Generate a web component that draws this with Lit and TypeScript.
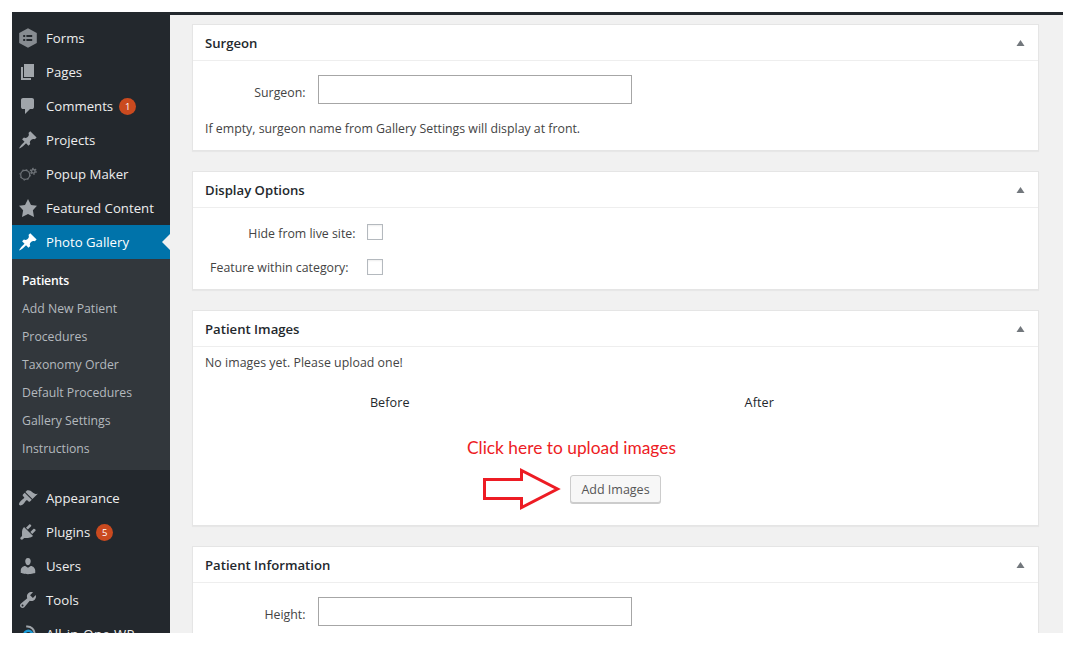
import { LitElement, html, css, svg, nothing } from "lit";
import { customElement, property } from "lit/decorators.js";
import { classMap } from "lit/directives/class-map.js";

const PIN = svg`<path d="M10.44 3.02l1.82-1.82 6.36 6.35-1.83 1.82c-1.05-.68-2.48-.57-3.41.36l-.75.75c-.92.93-1.04 2.35-.35 3.41l-1.83 1.82-2.41-2.41-2.8 2.79c-.42.42-3.38 2.71-3.8 2.29s1.86-3.39 2.28-3.81l2.79-2.79L4.1 9.36l1.83-1.82c1.05.69 2.48.57 3.4-.36l.75-.75c.93-.92 1.05-2.35.36-3.41z"/>`;

const ICONS: Record<string, unknown> = {
  forms: svg`<path opacity=".8" fill-rule="evenodd" d="M10 0.2L18.8 5v10L10 19.8 1.2 15V5zM5.2 6.9h2v2h-2zM8.4 6.9h5.8v2H8.4zM5.2 11.1h2v2h-2zM8.4 11.1h5.8v2H8.4z"/>`,
  pages: svg`<path d="M6 15V2h10v13H6zm-1 1h8v2H3V5h2v11z"/>`,
  comments: svg`<path d="M5 2h9q.82 0 1.41.59T16 4v7q0 .82-.59 1.41T14 13h-2l-5 5v-5H5q-.82 0-1.41-.59T3 11V4q0-.82.59-1.41T5 2z"/>`,
  pin: PIN,
  popup: svg`<g fill="none" stroke="currentColor" opacity=".6"><circle cx="7.2" cy="10.8" r="4.5" stroke-width="1.2"/><circle cx="7.2" cy="10.8" r="5.3" stroke-width="1" stroke-dasharray="1.7 2.46"/><circle cx="15.3" cy="7.3" r="1.8" stroke-width="1.4"/><circle cx="15.3" cy="7.3" r="2.9" stroke-width="1.2" stroke-dasharray="1.5 1.54"/></g>`,
  star: svg`<path d="M10 1l3 6 6 .75-4.12 4.62L16 19l-6-3-6 3 1.13-6.63L1 7.75 7 7z"/>`,
  appearance: svg`<path d="M14.48 11.06L7.41 3.99l1.5-1.5c.5-.56 2.3-.47 3.51.32 1.21.8 1.43 1.28 2.91 2.1 1.18.64 2.45 1.26 4.45.85zm-.71.71L6.7 4.7 4.93 6.47c-.39.39-.39 1.02 0 1.41l1.06 1.06c.39.39.39 1.03 0 1.42-.6.6-1.43 1.11-2.21 1.69-.35.26-.7.53-1.01.84C1.43 14.23.4 16.08 1.4 17.07c.99 1 2.84-.03 4.18-1.36.31-.31.58-.66.85-1.02.57-.78 1.08-1.61 1.69-2.21.39-.39 1.02-.39 1.41 0l1.06 1.06c.39.39 1.02.39 1.41 0z"/>`,
  plugins: svg`<path d="M13.11 4.36L9.87 7.6 8 5.73l3.24-3.24c.35-.34 1.05-.2 1.56.32.52.51.66 1.21.31 1.55zm-8 1.77l.91-1.12 9.01 9.01-1.19.84c-.71.71-2.63 1.16-3.82 1.16H6.14L4.9 17.26c-.59.59-1.54.59-2.12 0-.59-.58-.59-1.53 0-2.12l1.24-1.24v-3.88c0-1.13.4-3.19 1.09-3.89zm7.26 3.97l3.24-3.24c.34-.35 1.04-.21 1.55.31.52.51.66 1.21.31 1.55l-3.24 3.25z"/>`,
  users: svg`<path d="M10 9.25c-2.27 0-2.73-3.44-2.73-3.44C7 4.02 7.82 2 9.97 2c2.16 0 2.98 2.02 2.71 3.81 0 0-.41 3.44-2.68 3.44zm0 2.57L12.72 10c2.39 0 4.52 2.33 4.52 4.53v2.49s-3.65 1.13-7.24 1.13c-3.65 0-7.24-1.13-7.24-1.13v-2.49c0-2.25 1.94-4.48 4.47-4.48z"/>`,
  tools: svg`<path d="M16.68 9.77c-1.34 1.34-3.3 1.67-4.95.99l-5.41 6.52c-.99.99-2.59.99-3.58 0s-.99-2.59 0-3.57l6.52-5.42c-.68-1.65-.35-3.61.99-4.95 1.28-1.28 3.12-1.62 4.72-1.06l-2.89 2.89 2.82 2.82 2.86-2.87c.53 1.58.18 3.39-1.08 4.65zM3.81 16.21c.4.39 1.04.39 1.43 0 .4-.4.4-1.04 0-1.43-.39-.4-1.03-.4-1.43 0-.39.39-.39 1.03 0 1.43z"/>`,
  migration: svg`<g fill="none" stroke-width="2"><path stroke="currentColor" d="M8.2 2.6C13 2 17 5.4 16.6 11"/><circle cx="10.3" cy="10.8" r="4" stroke="#1b9ad6" stroke-width="2.6"/></g>`,
};

interface MenuEntry {
  label: string;
  icon: string;
  badge?: number;
  current?: boolean;
  wide?: boolean;
}

const MAIN: MenuEntry[] = [
  { label: "Forms", icon: "forms" },
  { label: "Pages", icon: "pages" },
  { label: "Comments", icon: "comments", badge: 1 },
  { label: "Projects", icon: "pin" },
  { label: "Popup Maker", icon: "popup" },
  { label: "Featured Content", icon: "star" },
  { label: "Photo Gallery", icon: "pin", current: true },
];

const SUB = [
  "Patients",
  "Add New Patient",
  "Procedures",
  "Taxonomy Order",
  "Default Procedures",
  "Gallery Settings",
  "Instructions",
];

const LOWER: MenuEntry[] = [
  { label: "Appearance", icon: "appearance" },
  { label: "Plugins", icon: "plugins", badge: 5 },
  { label: "Users", icon: "users" },
  { label: "Tools", icon: "tools" },
  { label: "All-in-One WP", icon: "migration", wide: true },
];

@customElement("admin-menu")
export class AdminMenu extends LitElement {
  static styles = css`
    :host {
      display: block;
      box-sizing: border-box;
      width: 158px;
      flex: none;
      padding-top: 6px;
      background: #23282d;
      color: #eee;
    }
    .item {
      position: relative;
      display: flex;
      align-items: center;
      height: 34px;
      padding-left: 6px;
      font-size: 13.2px;
      white-space: nowrap;
    }
    .wide {
      letter-spacing: 0.35px;
    }
    .icon {
      width: 20px;
      height: 20px;
      margin-right: 8px;
      fill: currentColor;
      color: #a0a5aa;
      flex: none;
    }
    .current {
      background: #0073aa;
      color: #fff;
    }
    .current .icon {
      color: #fff;
    }
    .current::after {
      content: "";
      position: absolute;
      right: 0;
      top: 9px;
      border: 8px solid transparent;
      border-left: 0;
      border-right-color: #f1f1f1;
    }
    .badge {
      width: 17px;
      height: 17px;
      margin-left: 6px;
      border-radius: 50%;
      background: #ca4a1f;
      color: #fff;
      font-size: 9.5px;
      line-height: 17px;
      text-align: center;
      font-weight: 500;
    }
    .sub {
      padding: 8px 0 7px 10px;
      margin-bottom: 11px;
      background: #32373c;
      color: #b4b9be;
      font-size: 12.25px;
      line-height: 28px;
    }
    .active {
      color: #fff;
      font-weight: 600;
      letter-spacing: -0.2px;
    }
  `;

  private row(e: MenuEntry) {
    return html`<div class=${classMap({ item: true, current: !!e.current, wide: !!e.wide })}>
      <svg class="icon" viewBox="0 0 20 20">${ICONS[e.icon]}</svg>
      <span>${e.label}</span>
      ${e.badge ? html`<span class="badge">${e.badge}</span>` : nothing}
    </div>`;
  }

  render() {
    return html`
      ${MAIN.map((e) => this.row(e))}
      <div class="sub">
        ${SUB.map((s, i) => html`<div class=${classMap({ active: i === 0 })}>${s}</div>`)}
      </div>
      ${LOWER.map((e) => this.row(e))}
    `;
  }
}

@customElement("meta-box")
export class MetaBox extends LitElement {
  @property() heading = "";

  static styles = css`
    :host {
      display: block;
      box-sizing: border-box;
      border: 1px solid #e5e5e5;
      background: #fff;
      box-shadow: 0 1px 1px rgba(0, 0, 0, 0.04);
      flex: none;
    }
    .head {
      display: flex;
      align-items: center;
      justify-content: space-between;
      box-sizing: border-box;
      height: 36px;
      padding: 0 13px 0 12px;
      border-bottom: 1px solid #eee;
      color: #23282d;
      font-size: 13.15px;
      font-weight: 600;
    }
    .toggle {
      width: 9px;
      height: 6px;
      margin-top: 1px;
      fill: #72777c;
    }
  `;

  render() {
    return html`
      <div class="head">
        <span>${this.heading}</span>
        <svg class="toggle" viewBox="0 0 9 6"><path d="M4.5 0L8.5 6H.5z" /></svg>
      </div>
      <slot></slot>
    `;
  }
}

@customElement("app-root")
export class AppRoot extends LitElement {
  static styles = css`
    :host {
      display: block;
      box-sizing: border-box;
      width: 1075px;
      height: 645px;
      padding: 12px;
      overflow: hidden;
      background: #fff;
      font-family: "Open Sans", "Noto Sans", sans-serif;
      font-size: 12.33px;
      line-height: 18px;
      color: #444;
    }
    .screen {
      display: flex;
      flex-direction: column;
      height: 621px;
      overflow: hidden;
      background: #f1f1f1;
    }
    .bar {
      height: 3px;
      flex: none;
      background: #23282d;
    }
    .body {
      display: flex;
      flex: 1;
      min-height: 0;
    }
    .main {
      display: flex;
      flex-direction: column;
      flex: 1;
      gap: 20px;
      padding: 9px 24px 0 22px;
    }
    .surgeon {
      height: 127px;
    }
    .display {
      height: 119px;
    }
    .images {
      height: 216px;
    }
    .info {
      height: 127px;
    }
    .field {
      display: grid;
      grid-template-columns: 112.5px 314px;
      column-gap: 12.5px;
      padding-top: 14px;
    }
    .label {
      text-align: right;
      padding-top: 9px;
      height: 20px;
    }
    .input {
      box-sizing: border-box;
      height: 29px;
      border: 1px solid #a6a6a6;
      background: #fff;
    }
    .hint {
      padding: 16px 12px 0;
    }
    .checks {
      display: grid;
      grid-template-columns: 162.5px 16px;
      column-gap: 11.5px;
      row-gap: 19px;
      padding-top: 16px;
    }
    .check {
      box-sizing: border-box;
      width: 16px;
      height: 16px;
      border: 1px solid #b4b9be;
      background: #fff;
      box-shadow: inset 0 1px 2px rgba(0, 0, 0, 0.07);
    }
    .check-label {
      height: 16px;
      line-height: 20px;
      text-align: right;
      white-space: nowrap;
    }
    .short {
      line-height: 18px;
      padding-right: 7px;
    }
    .empty {
      padding: 7px 12px 0;
      letter-spacing: 0.04px;
    }
    .columns {
      display: grid;
      grid-template-columns: 369.5px 369.5px;
      padding: 22px 12px 0;
      text-align: center;
      color: #23282d;
      font-size: 12.6px;
      letter-spacing: 0.08px;
    }
    .note {
      padding: 24px 0 0 274px;
      font-family: Lato, sans-serif;
      font-size: 17.35px;
      line-height: 24px;
      color: #ed1c24;
      white-space: nowrap;
    }
    .action {
      display: flex;
      align-items: center;
      gap: 9px;
      padding: 7px 0 0 289px;
    }
    .arrow {
      width: 79px;
      height: 43px;
      fill: none;
      stroke: #ed1c24;
      stroke-width: 3;
    }
    .button {
      box-sizing: border-box;
      width: 91px;
      height: 28px;
      border: 1px solid #ccc;
      border-radius: 3px;
      background: #f7f7f7;
      box-shadow: 0 1px 0 #ccc;
      color: #555;
      font: inherit;
      font-size: 12.5px;
      line-height: 25px;
      padding: 1px 0 0;
      white-space: nowrap;
    }
  `;

  render() {
    return html`
      <div class="screen">
        <div class="bar"></div>
        <div class="body">
          <admin-menu></admin-menu>
          <div class="main">
            <meta-box class="surgeon" heading="Surgeon">
              <div class="field">
                <div class="label">Surgeon:</div>
                <div class="input"></div>
              </div>
              <div class="hint">If empty, surgeon name from Gallery Settings will display at front.</div>
            </meta-box>
            <meta-box class="display" heading="Display Options">
              <div class="checks">
                <div class="check-label">Hide from live site:</div>
                <div class="check"></div>
                <div class="check-label short">Feature within category:</div>
                <div class="check"></div>
              </div>
            </meta-box>
            <meta-box class="images" heading="Patient Images">
              <div class="empty">No images yet. Please upload one!</div>
              <div class="columns"><span>Before</span><span>After</span></div>
              <div class="note">Click here to upload images</div>
              <div class="action">
                <svg class="arrow" viewBox="0 0 79 43">
                  <path d="M2.5 12.5H39.5V3.5L75.5 22 39.5 40.5V31.5H2.5z" />
                </svg>
                <button class="button">Add Images</button>
              </div>
            </meta-box>
            <meta-box class="info" heading="Patient Information">
              <div class="field">
                <div class="label">Height:</div>
                <div class="input"></div>
              </div>
            </meta-box>
          </div>
        </div>
      </div>
    `;
  }
}
